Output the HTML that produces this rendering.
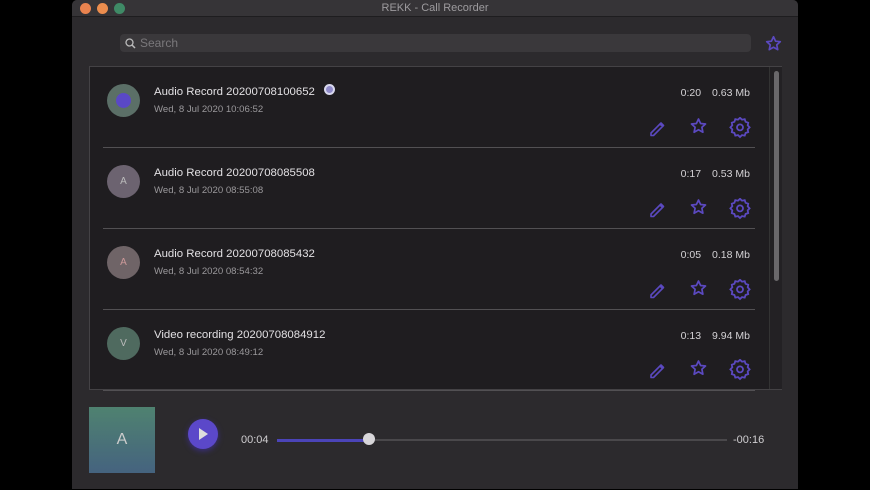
<!DOCTYPE html>
<html><head><meta charset="utf-8"><style>
*{margin:0;padding:0;box-sizing:border-box}
body{width:870px;height:490px;background:#000;font-family:"Liberation Sans",sans-serif;position:relative;overflow:hidden}
.win{position:absolute;left:72px;top:0;width:726px;height:489px;background:#2c2a2d;border-radius:5px 5px 0 0;overflow:hidden}
.title{position:absolute;left:0;top:0;width:726px;height:17px;background:#363437;border-bottom:1px solid #1e1d1f;color:#9d9b9e;font-size:11px;text-align:center;line-height:17px}
.dot{position:absolute;top:3px;width:11px;height:11px;border-radius:50%}
.search{position:absolute;left:48px;top:34px;width:631px;height:18px;background:#3a383b;border-radius:4px;color:#7a787b;font-size:12px;line-height:18px;padding-left:20px}
.panel{position:absolute;left:17px;top:66px;width:693px;height:324px;background:#1f1d20;border:1px solid #444245}
.row{position:absolute;left:13px;width:652px;height:81px;border-bottom:1px solid #525053}
.av{position:absolute;left:4px;top:17px;width:33px;height:33px;border-radius:50%;color:#bbb;font-size:10px;text-align:center;line-height:33px}
.name{position:absolute;left:51px;top:18px;color:#e2e0e3;font-size:11.4px;line-height:14px;white-space:nowrap}
.date{position:absolute;left:51px;top:37px;color:#9a989b;font-size:9.6px}
.meta{position:absolute;right:5px;top:20px;color:#d4d2d5;font-size:10.5px;white-space:nowrap}
.meta span{margin-left:11px}
.scroll{position:absolute;left:679px;top:0;width:13px;height:322px;background:#232124;border-left:1px solid #333}
.thumb{position:absolute;left:4px;top:4px;width:5px;height:210px;background:#6a686b;border-radius:3px}
</style></head><body>
<div class="win">
 <div class="title">REKK - Call Recorder
  <div class="dot" style="left:8px;background:#e9834f"></div>
  <div class="dot" style="left:25px;background:#ec8d4e"></div>
  <div class="dot" style="left:42px;background:#3f8a66"></div>
 </div>
 <div class="search"><svg style="position:absolute;left:5px;top:4px" width="11" height="11" viewBox="0 0 11 11"><circle cx="4.5" cy="4.5" r="3.5" fill="none" stroke="#bbb" stroke-width="1.3"/><line x1="7" y1="7" x2="10" y2="10" stroke="#bbb" stroke-width="1.5"/></svg>Search</div>
 <svg style="position:absolute;left:693px;top:35px" width="17" height="17" viewBox="0 0 24 24"><path d="M12 2.5l2.9 6.2 6.7.7-5 4.6 1.4 6.7L12 17.3l-6 3.4 1.4-6.7-5-4.6 6.7-.7z" fill="none" stroke="#5b49c0" stroke-width="2.4" stroke-linejoin="round"/></svg>
 <div class="panel">
  <div class="row" style="top:0"><div class="av" style="background:#5b6f67"><div style="position:absolute;left:9px;top:9px;width:15px;height:15px;border-radius:50%;background:#5a48c6"></div></div><div class="name">Audio Record 20200708100652</div><div style="position:absolute;left:221px;top:17px;width:11px;height:11px;border-radius:50%;background:#8f8ac9;border:2px solid #d8d8ee"></div><div class="date">Wed, 8 Jul 2020 10:06:52</div><div class="meta">0:20<span>0.63 Mb</span></div></div>
  <div class="row" style="top:81px"><div class="av" style="background:#6c6370">A</div><div class="name">Audio Record 20200708085508</div><div class="date">Wed, 8 Jul 2020 08:55:08</div><div class="meta">0:17<span>0.53 Mb</span></div></div>
  <div class="row" style="top:162px"><div class="av" style="background:#6f6467;color:#c99">A</div><div class="name">Audio Record 20200708085432</div><div class="date">Wed, 8 Jul 2020 08:54:32</div><div class="meta">0:05<span>0.18 Mb</span></div></div>
  <div class="row" style="top:243px"><div class="av" style="background:#4f6a5f">V</div><div class="name">Video recording 20200708084912</div><div class="date">Wed, 8 Jul 2020 08:49:12</div><div class="meta">0:13<span>9.94 Mb</span></div></div>
  <div class="scroll"><div class="thumb"></div></div>
 </div>
 <div style="position:absolute;left:17px;top:407px;width:66px;height:66px;background:linear-gradient(#4f8270,#45637f);color:#ccc;font-size:16px;text-align:center;line-height:66px">A</div>
 <div style="position:absolute;left:116px;top:419px;width:30px;height:30px;border-radius:50%;background:#5b48c9;box-shadow:0 2px 6px #3b2f80"><svg style="position:absolute;left:10px;top:8px" width="12" height="14"><path d="M1 1L10 7L1 13z" fill="#ddd"/></svg></div>
 <div style="position:absolute;left:169px;top:434px;color:#cfcdd0;font-size:11px">00:04</div>
 <div style="position:absolute;left:205px;top:439px;width:450px;height:2px;background:#4a484b"></div>
 <div style="position:absolute;left:205px;top:439px;width:92px;height:3px;background:#4b44b8"></div>
 <div style="position:absolute;left:291px;top:433px;width:12px;height:12px;border-radius:50%;background:#d8d6d9"></div>
 <div style="position:absolute;left:661px;top:434px;color:#cfcdd0;font-size:11px">-00:16</div>
</div>
<svg width="0" height="0" style="position:absolute"><defs>
<g id="ic">
<path d="M3 16l10-10 2.5 2.5-10 10H3z M12 7l2.5 2.5" fill="none" stroke="#5b49c0" stroke-width="1.6" stroke-linejoin="round"/>
<path transform="translate(42,1)" d="M8.5 1l2.1 4.5 4.9.5-3.6 3.3 1 4.9-4.4-2.5-4.4 2.5 1-4.9L1.5 6l4.9-.5z" fill="none" stroke="#5b49c0" stroke-width="1.7" stroke-linejoin="round"/>
<g transform="translate(82,0)" fill="none" stroke="#5b49c0" stroke-width="1.8"><path d="M10 0.8l2 1.9 2.7-.5 .9 2.6 2.6.9-.5 2.7 1.9 2-1.9 2 .5 2.7-2.6.9-.9 2.6-2.7-.5-2 1.9-2-1.9-2.7.5-.9-2.6-2.6-.9.5-2.7-1.9-2 1.9-2-.5-2.7 2.6-.9.9-2.6 2.7.5z"/><circle cx="10" cy="10.4" r="3"/></g>
</g></defs></svg>
<svg style="position:absolute;left:648px;top:117px" width="110" height="22"><use href="#ic"/></svg>
<svg style="position:absolute;left:648px;top:198px" width="110" height="22"><use href="#ic"/></svg>
<svg style="position:absolute;left:648px;top:279px" width="110" height="22"><use href="#ic"/></svg>
<svg style="position:absolute;left:648px;top:359px" width="110" height="22"><use href="#ic"/></svg>
</body></html>
